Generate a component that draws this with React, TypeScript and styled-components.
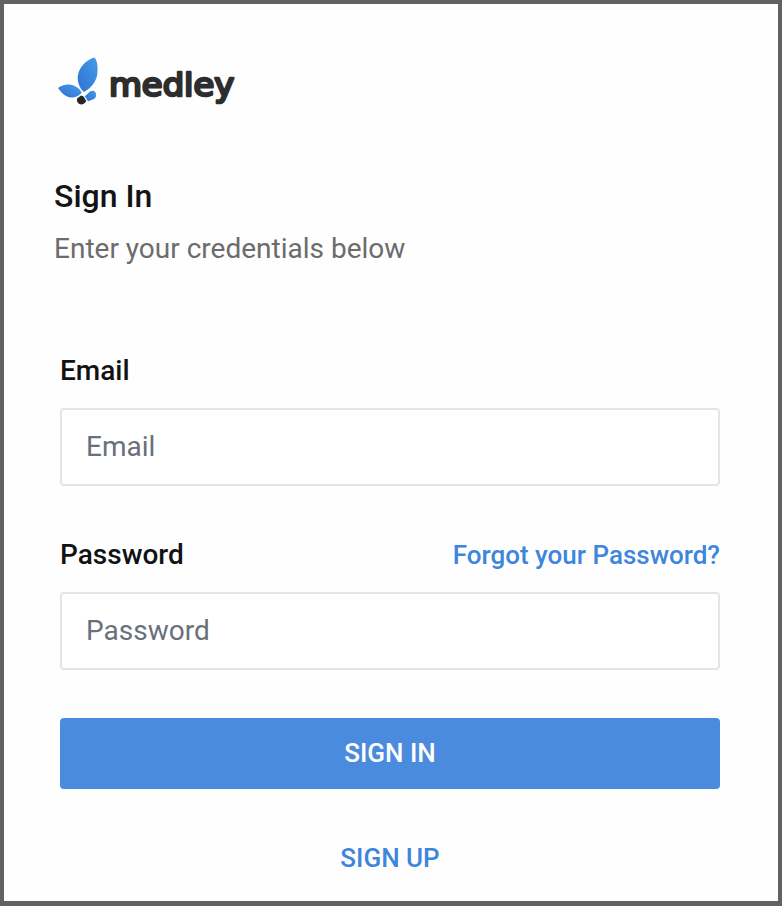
import React from "react";
import styled, { createGlobalStyle } from "styled-components";

const GlobalStyle = createGlobalStyle`
  * { box-sizing: border-box; }
  body { margin: 0; font-family: Roboto, "Liberation Sans", sans-serif; background: #fff; }
`;

const Frame = styled.main`
  width: 782px;
  height: 906px;
  border: 4px solid #626262;
  border-bottom-width: 5px;
  background: #fefefe;
  padding: 48px 58px 0 50px;
  overflow: hidden;
`;

const Logo = styled.svg`
  display: block;
  width: 190px;
  height: 60px;
`;

const Wordmark = styled.text`
  font-family: "DejaVu Sans", sans-serif;
  font-weight: 400;
  font-size: 32px;
  fill: #2d2d2e;
  stroke: #2d2d2e;
  stroke-width: 2.5px;
  stroke-linejoin: round;
`;

const Title = styled.h1`
  margin: 64px 0 0;
  font-size: 32px;
  line-height: 40px;
  font-weight: 500;
  color: #131415;
`;

const Subtitle = styled.p`
  margin: 13px 0 0;
  font-size: 28px;
  line-height: 40px;
  color: #6c6c6c;
`;

const Form = styled.form`
  margin: 86px 0 0 6px;
  display: flex;
  flex-direction: column;
`;

const Field = styled.div`
  height: 184px;
`;

const LabelRow = styled.div`
  display: flex;
  justify-content: space-between;
  align-items: center;
  height: 32px;
  margin-bottom: 21px;
`;

const Label = styled.label`
  font-size: 28px;
  line-height: 32px;
  font-weight: 500;
  color: #111213;
`;

const ForgotLink = styled.a`
  font-size: 26px;
  line-height: 32px;
  font-weight: 500;
  color: #3e85dc;
  text-decoration: none;
`;

const Input = styled.input`
  display: block;
  width: 100%;
  height: 78px;
  padding: 0 24px 2px;
  border: 2px solid #e5e5e5;
  border-radius: 4px;
  background: #fff;
  font: 400 28px/40px Roboto, sans-serif;
  outline: none;
  &::placeholder { color: #68717a; opacity: 1; }
`;

const SubmitButton = styled.button`
  height: 71px;
  margin-top: -5px;
  padding: 0 0 2px;
  border: 0;
  border-radius: 4px;
  background: #4b8bde;
  color: #fff;
  font: 500 26px/32px Roboto, sans-serif;
`;

const SignUpLink = styled.a`
  align-self: center;
  margin-top: 53px;
  font-size: 26px;
  line-height: 32px;
  font-weight: 500;
  color: #3e85dc;
  text-decoration: none;
`;

function MedleyLogo() {
  return (
    <Logo viewBox="54 52 190 60" role="img" aria-label="medley">
      <defs>
        <linearGradient id="wing" x1="1" y1="0" x2="0" y2="1">
          <stop offset="0" stopColor="#469be9" />
          <stop offset="1" stopColor="#2f72d3" />
        </linearGradient>
      </defs>
      <path d="M94.4 57.5C97.3 60.5 98 66.5 97.4 73C96.8 81 91.5 88 84 92C79.5 88.5 76.4 80.5 78.3 73.5C80 66.5 86.5 60 94.4 57.5Z" fill="url(#wing)" />
      <path d="M58 88C64.5 82.8 76 83 81.8 92.5C78 97.3 72 98.8 67 96.5C63.5 95 60.3 91.3 58 88Z" fill="url(#wing)" />
      <path d="M84.8 96.2L90 91.6C92.6 89.9 95.5 91.2 96 93.9C96.5 96.8 95.2 98.6 92.8 99.6L88 101.2Z" fill="url(#wing)" />
      <path d="M81 95.6L83.6 96.4L86.2 101C84.9 103.7 82.6 104.8 80 104.3C77.3 103.3 76.6 101 77.1 98.6Z" fill="#242628" />
      <Wordmark x="108.9" y="95.6" textLength="125.4" lengthAdjust="spacingAndGlyphs">medley</Wordmark>
    </Logo>
  );
}

export default function App() {
  return (
    <>
      <GlobalStyle />
      <Frame>
        <MedleyLogo />
        <Title>Sign In</Title>
        <Subtitle>Enter your credentials below</Subtitle>
        <Form>
          <Field>
            <LabelRow><Label htmlFor="email">Email</Label></LabelRow>
            <Input id="email" type="email" placeholder="Email" />
          </Field>
          <Field>
            <LabelRow>
              <Label htmlFor="password">Password</Label>
              <ForgotLink href="#">Forgot your Password?</ForgotLink>
            </LabelRow>
            <Input id="password" type="password" placeholder="Password" />
          </Field>
          <SubmitButton type="button">SIGN IN</SubmitButton>
          <SignUpLink href="#">SIGN UP</SignUpLink>
        </Form>
      </Frame>
    </>
  );
}
